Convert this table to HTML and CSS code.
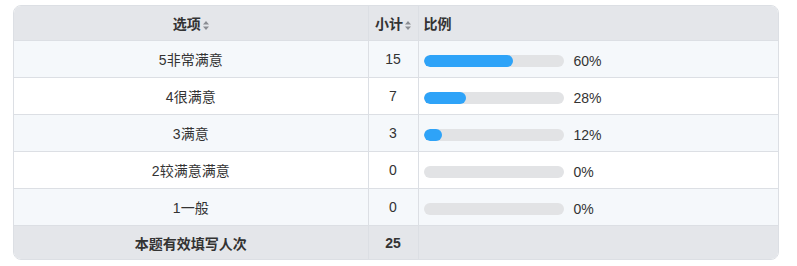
FILE: index.html
```html
<!DOCTYPE html>
<html lang="zh">
<head>
<meta charset="utf-8">
<link rel="stylesheet" href="styles.css">
</head>
<body>
<div class="wrap">
  <table class="stats">
    <colgroup>
      <col class="c-opt">
      <col class="c-num">
      <col class="c-pct">
    </colgroup>
    <thead>
      <tr>
        <th class="center">选项<svg class="sort" width="6" height="9" viewBox="0 0 6 9"><path d="M3 0 L6 3.5 H0 Z M3 9 L6 5.5 H0 Z" fill="#8a8d93"/></svg></th>
        <th class="center">小计<svg class="sort" width="6" height="9" viewBox="0 0 6 9"><path d="M3 0 L6 3.5 H0 Z M3 9 L6 5.5 H0 Z" fill="#8a8d93"/></svg></th>
        <th class="left">比例</th>
      </tr>
    </thead>
    <tbody>
      <tr class="odd"><td class="center">5非常满意</td><td class="center">15</td><td><div class="ratio"><div class="track"><div class="fill" style="width:64%"></div></div><span class="pct">60%</span></div></td></tr>
      <tr><td class="center">4很满意</td><td class="center">7</td><td><div class="ratio"><div class="track"><div class="fill" style="width:30%"></div></div><span class="pct">28%</span></div></td></tr>
      <tr class="odd"><td class="center">3满意</td><td class="center">3</td><td><div class="ratio"><div class="track"><div class="fill" style="width:13%"></div></div><span class="pct">12%</span></div></td></tr>
      <tr><td class="center">2较满意满意</td><td class="center">0</td><td><div class="ratio"><div class="track"></div><span class="pct">0%</span></div></td></tr>
      <tr class="odd"><td class="center">1一般</td><td class="center">0</td><td><div class="ratio"><div class="track"></div><span class="pct">0%</span></div></td></tr>
    </tbody>
    <tfoot>
      <tr><td class="center bold">本题有效填写人次</td><td class="center bold">25</td><td></td></tr>
    </tfoot>
  </table>
</div>
</body>
</html>
```
FILE: styles.css
```css
html, body {
  margin: 0;
  padding: 0;
  background: #ffffff;
}
body {
  font-family: "Liberation Sans", "Noto Sans CJK SC", sans-serif;
  font-size: 14px;
  color: #333333;
}
.wrap {
  margin: 5px 0 0 13px;
  width: 764px;
  border: 1px solid #dcdfe4;
  border-radius: 8px;
  overflow: hidden;
}
.stats {
  width: 100%;
  border-collapse: collapse;
  table-layout: fixed;
}
.c-opt { width: 354px; }
.c-num { width: 50px; }
.c-pct { width: 360px; }
.stats th, .stats td {
  padding: 0 5px;
  border-left: 1px solid #dcdfe4;
  border-bottom: 1px solid #dcdfe4;
}
.stats th:first-child, .stats td:first-child {
  border-left: none;
}
.stats thead th {
  height: 34px;
  background: #e4e6ea;
  font-weight: bold;
  color: #333333;
}
.stats tbody td {
  height: 36px;
}
.stats tbody tr.odd td {
  background: #f5f8fb;
}
.stats tfoot td {
  height: 33px;
  background: #e4e6ea;
  border-bottom: none;
}
.center { text-align: center; }
.left { text-align: left; }
.bold { font-weight: bold; }
.sort {
  margin-left: 2px;
  vertical-align: -1px;
}
.ratio {
  display: flex;
  align-items: center;
  gap: 10px;
  padding-top: 3px;
}
.track {
  width: 140px;
  height: 12px;
  border-radius: 6px;
  background: #e2e3e5;
  overflow: hidden;
}
.fill {
  height: 100%;
  border-radius: 6px;
  background: #2ea3f8;
}
.pct {
  color: #333333;
}
```
